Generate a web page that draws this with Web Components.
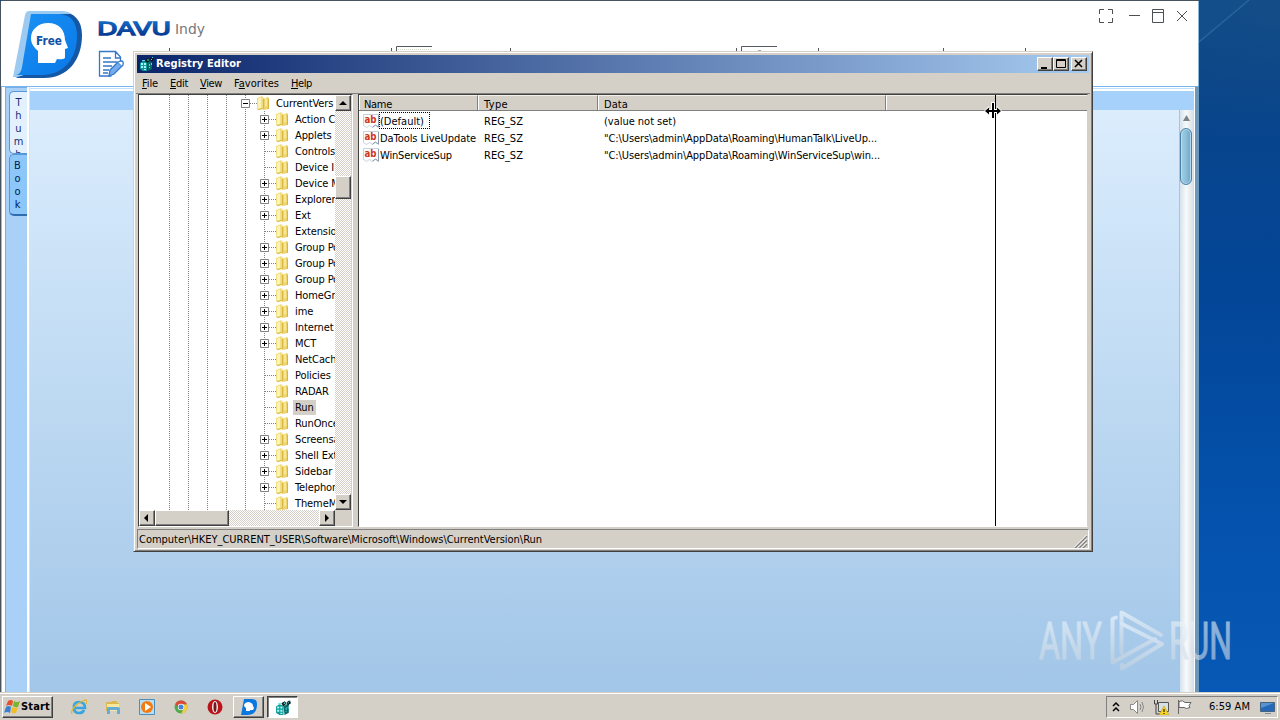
<!DOCTYPE html>
<html lang="en">
<head>
<meta charset="UTF-8">
<title>Registry Editor</title>
<style>
    * {
        box-sizing: border-box;
    }

    body {
        margin: 0;
        width: 1280px;
        height: 720px;
        overflow: hidden;
        font: 11px/16px "DejaVu Sans Condensed", "DejaVu Sans", sans-serif;
        color: #000;
    }
</style>
</head>
<body>
<desk-top>
    <davu-window></davu-window>
    <registry-window></registry-window>
    <any-run></any-run>
    <task-bar slot="taskbar"></task-bar>
</desk-top>

<script>
// shared look of all classic controls
const base = `
    * { box-sizing: border-box; }
    svg { display: block; flex: none; }
    .raised {
        background: #d4d0c8;
        border: 1px solid;
        border-color: #fff #404040 #404040 #fff;
        box-shadow: inset -1px -1px #808080;
    }
`;

class BaseElement extends HTMLElement {
    render(html) {
        if (!this.shadowRoot) this.attachShadow({ mode: "open" });
        const template = document.createElement("template");
        template.innerHTML = html.trim();
        this.shadowRoot.appendChild(template.content.cloneNode(true));
    }
}

const regIcon = (size) => `
    <svg width="${size}" height="${size}" viewBox="0 0 16 16">
        <path d="M1 7l3-2 4 1v9H4l-3-2z" fill="#0d9a98"/>
        <path d="M8 7l3-2h2v8l-4 2z" fill="#04696b"/>
        <path d="M2 7h2v2H2zM5 7h2v2H5zM2 10h2v2H2zM5 10h2v2H5zM5 13h2v1H5z" fill="#a4f6f2"/>
        <path d="M6 4l3-2 2 2-3 3zM11 3l3-2 1 3-3 2z" fill="#0b1c20"/>
        <path d="M8 4l1-1 1 1-1 1zM12 3h1v1h-1zM10 8h1v2h-1zM12 7h1v2h-1zM10 11h1v1h-1zM3 4h3v1H3zM13 1h1v1h-1z" fill="#4fd8d4"/>
    </svg>`;

// one line of text, letter spacing is adjusted so that it takes w pixels
class UiLabel extends BaseElement {
    connectedCallback() {
        this.render(`
            <style>
                :host { display: inline-block; white-space: nowrap; }
                span { display: inline-block; }
                ::slotted(u) { text-underline-offset: 1px; }
            </style>
            <span><slot></slot></span>
        `);
        const width = Number(this.getAttribute("w"));
        if (!width) return;
        const span = this.shadowRoot.querySelector("span");
        const natural = span.getBoundingClientRect().width;
        span.style.letterSpacing = (width - natural) / this.textContent.length + "px";
    }
}

class DeskTop extends BaseElement {
    connectedCallback() {
        this.render(`
            <style>
                ${base}
                :host {
                    display: flex;
                    flex-direction: column;
                    width: 1280px;
                    height: 720px;
                    overflow: hidden;
                    background: #0550ab;
                }
                .area {
                    position: relative;
                    flex: 1;
                    overflow: hidden;
                    background:
                        radial-gradient(ellipse at 100% 0, rgba(26,82,134,.6), rgba(0,70,140,0) 14%),
                        linear-gradient(#0b4587 0, #08448a 14%, #034596 40%, #0452ad 75%, #0759b5);
                }
                .ray { position: absolute; left: 1199px; top: 0; }
            </style>
            <div class="area">
                <svg class="ray" width="81" height="60">
                    <path d="M0 42L50 0" stroke="#2d679f" stroke-width="1.5"/>
                    <path d="M0 42L50 0H0z" fill="#1a5693" opacity=".3"/>
                </svg>
                <slot></slot>
            </div>
            <slot name="taskbar"></slot>
        `);
    }
}

class DavuWindow extends BaseElement {
    connectedCallback() {
        this.render(`
            <style>
                ${base}
                :host {
                    position: absolute;
                    left: 0;
                    top: 0;
                    width: 1199px;
                    height: 693px;
                    display: flex;
                    flex-direction: column;
                    background: #fff;
                    border-top: 1px solid #485360;
                    border-left: 1px solid #485360;
                    border-radius: 3px 0 0 0;
                }
                header {
                    height: 85px;
                    display: flex;
                    justify-content: space-between;
                    background: #fff;
                    flex: none;
                    border-right: 1px solid #8bb7dc;
                }
                .body {
                    flex: 1;
                    display: flex;
                    min-height: 0;
                    border: solid #79b4ec;
                    border-width: 1px 4px 0 0;
                    border-color: #79b4ec #6b97bd;
                }
                .edge { width: 4px; background: linear-gradient(90deg, #94bce4 1px, #fff 1px 4px); }
                .rail {
                    width: 22px;
                    padding: 3px 0 0 3px;
                    background: #a9d1f7;
                    border: 1px solid #76aeea;
                    border-right: 0;
                    border-bottom: 0;
                    display: flex;
                    flex-direction: column;
                }
                .tab {
                    border: 1px solid #5796d9;
                    border-right: 0;
                    border-radius: 5px 0 0 5px;
                    background: #e3f1ff;
                    color: #122f75;
                    font: 11px/13px "DejaVu Sans Condensed", sans-serif;
                    text-align: center;
                    white-space: pre;
                    height: 63px;
                    padding: 4px 0 0 0;
                    overflow: hidden;
                }
                .tab.book {
                    background: #8dc7fa;
                    color: #001c50;
                    height: 62px;
                    padding: 4px 2px 0 0;
                    border-bottom: 2px solid #2f6daf;
                }
                .split { width: 2px; margin-top: 3px; background: #fff; }
                .view {
                    flex: 1;
                    display: flex;
                    flex-direction: column;
                    border-top: 1px solid #fff;
                    border-left: 1px solid #cfe5fa;
                    border-right: 1px solid #fff;
                }
                .bar {
                    height: 22px;
                    background: linear-gradient(#c0e0ff 1px, #fff 1px 3px, #a5d1fa 3px);
                }
                .page {
                    flex: 1;
                    display: flex;
                    justify-content: flex-end;
                    background: linear-gradient(#dbedfd, #c0dbf3 45%, #a2c6e8);
                }
                .scroll {
                    width: 15px;
                    background: linear-gradient(90deg, #d6e2ec, #f8fafc 45%, #d5dde4);
                    border-left: 1px solid #aac4dc;
                    padding: 4px 0 0;
                }
                .thumb {
                    width: 12px;
                    height: 57px;
                    margin-top: 6px;
                    border: 1px solid #4a83aa;
                    border-radius: 6px;
                    background: linear-gradient(90deg, #a4cfe3, #8bbfdb 50%, #6ca5c5);
                    box-shadow: inset 0 0 0 1px #b7dbea;
                }
            </style>
            <header>
                <svg width="1040" height="85" viewBox="1 1 1040 85">
                    <defs>
                        <linearGradient id="face" x2="1" y2="1">
                            <stop offset="0" stop-color="#1b91f3"/>
                            <stop offset="1" stop-color="#0878e8"/>
                        </linearGradient>
                        <linearGradient id="word" x2="0" y2="1">
                            <stop offset="0" stop-color="#1675cf"/>
                            <stop offset="1" stop-color="#042c83"/>
                        </linearGradient>
                    </defs>
                    <path d="M30 12q-3 0-4 4L15 73q-1 5 4 5h25c24 0 38-18 38-43 0-15-8-23-21-23z" fill="#1457a4"/>
                    <path d="M29 11q-3 0-4 4L13 77h4q9-2 11-5 3-4 5-22l5-30 6-6h28q-4-3-11-3z" fill="#9dcaf0"/>
                    <path d="M31 14L22 67q-1 7-6 8h26c21 0 35-16 35-39 0-14-6-21-17-22z" fill="url(#face)"/>
                    <path d="M38 63v-12c-4-4-7-7-7-13 0-9 8-15 17-15 11 0 17 7 17 17l3 8-3 1v9q-2 2-8 1l-2 4z" fill="#fff"/>
                    <text x="36" y="45" font-family="DejaVu Sans Condensed, sans-serif" font-weight="bold" font-size="12" textLength="26" lengthAdjust="spacingAndGlyphs" fill="#1352a6">Free</text>
                    <text x="97" y="35" font-family="DejaVu Sans, sans-serif" font-size="18" textLength="74" lengthAdjust="spacingAndGlyphs" fill="url(#word)" stroke="url(#word)" stroke-width="1.3">DAVU</text>
                    <text x="175" y="34" font-family="DejaVu Sans, sans-serif" font-size="14" textLength="30" lengthAdjust="spacingAndGlyphs" fill="#77777b">Indy</text>
                    <g fill="none" stroke="#3577c9" stroke-width="1.3">
                        <path d="M120.500 61v-4l-5-5.500h-16v24.500h12M115.500 52v6h5M103 58h8M103 62h14M103 66h9M103 70h6M103 73h5"/>
                        <path d="M110 70l8-8 4 4-8 8-5 2z" fill="#73adf0"/>
                        <path d="M118 62l3-1q3 0 2 4l-1 1" fill="#fff"/>
                    </g>
                    <g stroke="#555a60" fill="none">
                        <path d="M169.500 48v5M391.500 48v5M396.500 53v-6.500H432M510.500 48v5M736.500 48v5M741.500 53v-6.500H777M818.500 48v5M943.500 48v5M1025.500 48v5"/>
                        <path d="M398 49.500h33" stroke="#d5d8c6" stroke-dasharray="1 1"/>
                        <path d="M758 50.500h3" stroke="#aaa"/>
                    </g>
                </svg>
                <svg width="110" height="40" viewBox="1088 1 110 40" fill="none" stroke="#4d5053">
                    <path d="M1099.500 14V9.500h4.500M1108 9.500h4.500V14M1112.500 18v4.500H1108M1104 22.500h-4.500V18M1129 15.500h11M1152.500 9.500h11v13h-11zM1152.500 12.500h11M1177 11l10 10M1187 11l-10 10"/>
                </svg>
            </header>
            <div class="body">
                <div class="edge"></div>
                <div class="rail">
                    <div class="tab">T\nh\nu\nm\nb</div>
                    <div class="tab book">B\no\no\nk</div>
                </div>
                <div class="split"></div>
                <div class="view">
                    <div class="bar"></div>
                    <div class="page">
                        <div class="scroll">
                            <svg width="13" height="8"><path d="M3 7h7L6.500 1z" fill="#7b8289"/></svg>
                            <div class="thumb"></div>
                        </div>
                    </div>
                </div>
            </div>
        `);
    }
}

// square button with an arrow, used at both ends of the scrollbars
class ArrowButton extends BaseElement {
    connectedCallback() {
        const paths = {
            up: "M3 9h8L7 5z",
            down: "M3 5h8L7 9z",
            left: "M8 3v8L4 7z",
            right: "M5 3v8l4-4z",
        };
        this.render(`
            <style>
                ${base}
                :host { display: block; width: 16px; height: 16px; flex: none; }
                div { width: 100%; height: 100%; }
            </style>
            <div class="raised"><svg width="14" height="14"><path d="${paths[this.getAttribute("dir")]}"/></svg></div>
        `);
    }
}

class TreeItem extends BaseElement {
    connectedCallback() {
        const root = this.hasAttribute("root");
        const box = this.getAttribute("box");
        this.render(`
            <style>
                ${base}
                :host {
                    display: flex;
                    align-items: center;
                    height: 16px;
                    padding-left: ${root ? 102 : 121}px;
                    white-space: nowrap;
                    flex: none;
                }
                .text { line-height: 15px; margin-left: 0; padding: 0 2px; letter-spacing: -0.1px; }
                :host([selected]) .text { background: #d4d0c8; }
            </style>
            <svg width="33" height="16">
                <path d="M4.500 0v16M5 8.500h11" stroke="#808080" stroke-dasharray="1 1" fill="none"/>
                ${box ? `<path d="M.500 4.500h8v8h-8z" fill="#fff" stroke="#808080"/><path d="M2 8.500h5${box === "+" ? "M4.500 6v5" : ""}" stroke="#000"/>` : ""}
                <path d="M16 3l5-2 2 2v11l-6 1-1-1z" fill="#f1dd82"/>
                <path d="M22 4l5-2 1 1v11l-6 1z" fill="#ecd268"/>
                <path d="M17 4l3-2v11l-3 1z" fill="#fbf3b7"/>
                <path d="M24 4l2-1v8l-2 1z" fill="#f7e797"/>
                <path d="M22 4h1v9l-1 1zM17 14l5-1v1l-5 1zM27 4h1v10h-1z" fill="#d6b548"/>
            </svg>
            <span class="text"><slot></slot></span>
        `);
    }
}

class RegistryTree extends BaseElement {
    connectedCallback() {
        const items = [
            ["Action C", "+"], ["Applets", "+"], ["Controls"], ["Device I"], ["Device M", "+"],
            ["Explorer", "+"], ["Ext", "+"], ["Extensio"], ["Group Po", "+"], ["Group Po", "+"],
            ["Group Po", "+"], ["HomeGro", "+"], ["ime", "+"], ["Internet", "+"], ["MCT", "+"],
            ["NetCach"], ["Policies"], ["RADAR"], ["Run"], ["RunOnce"], ["Screensa", "+"],
            ["Shell Ext", "+"], ["Sidebar", "+"], ["Telephon", "+"], ["ThemeM"],
        ];
        this.render(`
            <style>
                ${base}
                :host {
                    display: flex;
                    flex-direction: column;
                    width: 215px;
                    border: 1px solid #404040;
                    border-right-color: #fff;
                    border-bottom-color: #fff;
                    background: #fff;
                }
                .top { display: flex; height: 415px; }
                .rows {
                    width: 196px;
                    display: flex;
                    flex-direction: column;
                    overflow: hidden;
                    background-image: linear-gradient(#808080 50%, transparent 50%),
                        linear-gradient(#808080 50%, transparent 50%), linear-gradient(#808080 50%, transparent 50%),
                        linear-gradient(#808080 50%, transparent 50%), linear-gradient(#808080 50%, transparent 50%);
                    background-size: 1px 2px;
                    background-repeat: repeat-y;
                    background-position: 30px 0, 49px 0, 68px 0, 87px 0, 106px 0;
                }
                .track { background: repeating-conic-gradient(#d4d0c8 0 25%, #fff 0 50%) 0 0 / 2px 2px; }
                .v { width: 16px; display: flex; flex-direction: column; }
                .v .thumb { height: 23px; margin: 65px 0 auto; }
                .h { height: 16px; display: flex; }
                .h .thumb { width: 74px; margin-right: auto; }
                .corner { width: 17px; background: #d4d0c8; }
                .fill { background: #d4d0c8; flex: 1; }
            </style>
            <div class="top">
                <div class="rows">
                    <tree-item root box="-">CurrentVers</tree-item>
                    ${items.map(([name, box]) => `<tree-item ${box ? `box="${box}"` : ""} ${name === "Run" ? "selected" : ""}>${name}</tree-item>`).join("")}
                </div>
                <div class="v track">
                    <arrow-button dir="up"></arrow-button>
                    <div class="thumb raised"></div>
                    <arrow-button dir="down"></arrow-button>
                </div>
                <div class="fill"></div>
            </div>
            <div class="h track">
                <arrow-button dir="left"></arrow-button>
                <div class="thumb raised"></div>
                <arrow-button dir="right"></arrow-button>
                <div class="corner"></div>
            </div>
        `);
    }
}

class ValueRow extends BaseElement {
    connectedCallback() {
        this.render(`
            <style>
                ${base}
                :host {
                    display: grid;
                    grid-template-columns: 125px 120px 1fr;
                    height: 17px;
                    line-height: 19px;
                    white-space: nowrap;
                }
                .name { display: flex; align-items: center; height: 17px; padding-left: 4px; }
                .label { padding: 0 1px; height: 17px; }
                :host([focused]) .label { outline: 1px dotted #000; outline-offset: -1px; width: 51px; }
            </style>
            <div class="name">
                <svg width="16" height="16">
                    <path d="M.500 1.500h15v13l-3-2-3 2-3-2-3 2-3-2z" fill="#fff" stroke="#c8d1dc"/>
                    <path d="M15.500 2v12l-3-2-3 2" stroke="#8b99ab" fill="none"/>
                    <text x="1.500" y="10" font-family="DejaVu Sans Condensed, sans-serif" font-size="10" font-weight="bold" textLength="12" lengthAdjust="spacingAndGlyphs" fill="#cf3520">ab</text>
                </svg>
                <div class="label"><slot name="name"></slot></div>
            </div>
            <slot name="type"></slot>
            <slot name="data"></slot>
        `);
    }
}

class ValueList extends BaseElement {
    connectedCallback() {
        this.render(`
            <style>
                ${base}
                :host {
                    position: relative;
                    display: flex;
                    flex-direction: column;
                    flex: 1;
                    background: #fff;
                    border: 1px solid #404040;
                    border-right-color: #d4d0c8;
                    border-bottom-color: #fff;
                }
                .head {
                    display: grid;
                    grid-template-columns: 119px 120px 288px 110px 1fr;
                    height: 16px;
                    background: #d4d0c8;
                    border-bottom: 1px solid #808080;
                    margin-bottom: 1px;
                }
                .head div {
                    height: 15px;
                    padding-left: 5px;
                    line-height: 18px;
                    border-top: 1px solid #f3f1ec;
                    border-right: 1px solid #808080;
                    border-left: 1px solid #fff;
                }
                .head div:first-child { padding-left: 4px; }
                .head div:nth-child(n+4) { border-right: 0; }
                .head div:last-child { border-left: 0; }
                .guide { position: absolute; left: 636px; top: 0; width: 1px; bottom: 0; background: #000; }
                .cursor { position: absolute; left: 625px; top: 7px; }
            </style>
            <div class="head">
                <div><ui-label w="28">Name</ui-label></div>
                <div><ui-label w="24">Type</ui-label></div>
                <div><ui-label w="24">Data</ui-label></div>
                <div></div>
                <div></div>
            </div>
            <value-row focused>
                <ui-label slot="name" w="44">(Default)</ui-label>
                <ui-label slot="type" w="39">REG_SZ</ui-label>
                <ui-label slot="data" w="72">(value not set)</ui-label>
            </value-row>
            <value-row>
                <ui-label slot="name" w="96">DaTools LiveUpdate</ui-label>
                <ui-label slot="type" w="39">REG_SZ</ui-label>
                <ui-label slot="data" w="273">"C:\\Users\\admin\\AppData\\Roaming\\HumanTalk\\LiveUp...</ui-label>
            </value-row>
            <value-row>
                <ui-label slot="name" w="72">WinServiceSup</ui-label>
                <ui-label slot="type" w="39">REG_SZ</ui-label>
                <ui-label slot="data" w="276">"C:\\Users\\admin\\AppData\\Roaming\\WinServiceSup\\win...</ui-label>
            </value-row>
            <div class="guide"></div>
            <svg class="cursor" width="18" height="18">
                <path d="M7 0h4v7h2V4l5 5-5 5v-3h-2v7H7v-7H5v3L0 9l5-5v3h2z" fill="#fff"/>
                <path d="M8 1h2v15H8zM2 8h14v2H2z"/>
                <path d="M5 5.500v7L1 9zM13 5.500v7L17 9z"/>
            </svg>
        `);
    }
}

class RegistryWindow extends BaseElement {
    connectedCallback() {
        this.render(`
            <style>
                ${base}
                :host {
                    position: absolute;
                    left: 133px;
                    top: 51px;
                    width: 960px;
                    height: 501px;
                    padding: 2px;
                    display: flex;
                    flex-direction: column;
                    background: #d4d0c8;
                    border: 1px solid;
                    border-color: #d4d0c8 #404040 #404040 #d4d0c8;
                    box-shadow: inset 1px 1px #fff, inset -1px -1px #808080;
                }
                .title {
                    display: flex;
                    align-items: center;
                    height: 18px;
                    margin: 1px;
                    padding: 0 2px;
                    color: #fff;
                    font-weight: bold;
                    background: linear-gradient(90deg, #0a246a, #a6caf0);
                }
                .title ui-label { margin: 0 auto 0 1px; line-height: 18px; }
                .btn { width: 16px; height: 14px; }
                .btn:last-child { margin-left: 2px; }
                nav { display: flex; gap: 12px; padding: 1px 0 0 6px; height: 19px; line-height: 17px; }
                .panes { display: flex; gap: 5px; height: 434px; padding: 0 2px 0 2px; border-top: 1px solid #808080; }
                .status {
                    height: 20px;
                    margin: 2px 1px 0 1px;
                    padding-left: 1px;
                    display: flex;
                    justify-content: space-between;
                    line-height: 19px;
                    border: 1px solid #808080;
                    border-right-color: #fff;
                    border-bottom-color: #fff;
                }
            </style>
            <div class="title">
                ${regIcon(16)}
                <ui-label w="85">Registry Editor</ui-label>
                <div class="btn raised"><svg width="14" height="12"><path d="M3 9h6v2H3z"/></svg></div>
                <div class="btn raised"><svg width="14" height="12"><path d="M2.500 1.500h9v8h-9zM2 2.500h10" fill="none" stroke="#000"/></svg></div>
                <div class="btn raised"><svg width="14" height="12"><path d="M3 2l7 7M10 2l-7 7" stroke="#000" stroke-width="1.600"/></svg></div>
            </div>
            <nav>
                <ui-label w="16"><u>F</u>ile</ui-label>
                <ui-label w="18"><u>E</u>dit</ui-label>
                <ui-label w="22"><u>V</u>iew</ui-label>
                <ui-label w="45">F<u>a</u>vorites</ui-label>
                <ui-label w="21"><u>H</u>elp</ui-label>
            </nav>
            <div class="panes">
                <registry-tree></registry-tree>
                <value-list></value-list>
            </div>
            <div class="status">
                <ui-label w="403">Computer\\HKEY_CURRENT_USER\\Software\\Microsoft\\Windows\\CurrentVersion\\Run</ui-label>
                <svg width="14" height="18" fill="none">
                    <path d="M1 18L13 6M5 18l8-8M9 18l4-4" stroke="#808080" stroke-width="1.500"/>
                    <path d="M0 17.500L12.500 5M4 17.500L12.500 9M8 17.500l4.500-4.500" stroke="#fff"/>
                </svg>
            </div>
        `);
    }
}

class AnyRun extends BaseElement {
    connectedCallback() {
        this.render(`
            <style>
                :host { position: absolute; left: 1030px; top: 605px; opacity: .6; }
                svg { display: block; }
            </style>
            <svg width="210" height="75" viewBox="1030 605 210 75">
                <defs>
                    <linearGradient id="g" x2="0" y2="1">
                        <stop offset="0" stop-color="#f4faff"/>
                        <stop offset="1" stop-color="#c9d4df"/>
                    </linearGradient>
                </defs>
                <g fill="url(#g)" stroke="url(#g)" stroke-width="1" font-family="Roboto, sans-serif" font-size="51">
                    <text x="1039" y="659" textLength="63" lengthAdjust="spacingAndGlyphs">ANY</text>
                    <text x="1169" y="659" textLength="63" lengthAdjust="spacingAndGlyphs">RUN</text>
                </g>
                <g fill="none" stroke="url(#g)" stroke-width="4" stroke-linejoin="round" stroke-linecap="round">
                    <path d="M1121.500 653V612.500L1161 635"/>
                    <path d="M1116 617.500L1112.500 619V662.500L1155 639"/>
                    <path d="M1122 624L1162 644L1122 668.500V665"/>
                </g>
            </svg>
        `);
    }
}

class TaskBar extends BaseElement {
    connectedCallback() {
        this.render(`
            <style>
                ${base}
                :host {
                    display: flex;
                    align-items: center;
                    height: 28px;
                    flex: none;
                    padding: 1px 2px 0;
                    background: #d4d0c8;
                    border-top: 1px solid #d4d0c8;
                    box-shadow: inset 0 1px #fff;
                    z-index: 1;
                }
                .start {
                    display: flex;
                    align-items: center;
                    width: 51px;
                    height: 22px;
                    padding-left: 1px;
                    font-weight: bold;
                    line-height: 18px;
                }
                .quick { display: flex; gap: 18px; margin: 0 10px 0 18px; }
                .task { width: 31px; height: 22px; padding: 2px 7px; margin-right: 3px; }
                .active {
                    background: #fff;
                    border: 1px solid;
                    border-color: #404040 #fff #fff #404040;
                    box-shadow: inset 1px 1px #808080;
                }
                .tray {
                    display: flex;
                    align-items: center;
                    gap: 8px;
                    width: 172px;
                    height: 22px;
                    margin-left: auto;
                    padding-left: 4px;
                    border: 1px solid;
                    border-color: #808080 #fff #fff #808080;
                }
                .tray svg:nth-of-type(3), .tray svg:nth-of-type(4) { margin-left: -1px; }
                .tray ui-label { margin-left: 8px; line-height: 18px; }
                .tray svg:last-child { margin-left: 2px; }
            </style>
            <div class="start raised">
                <svg width="17" height="16">
                    <path d="M4 2q3-2 5 0L8 7Q5 5 2 7z" fill="#e6502b"/>
                    <path d="M10 2q3 2 6 0l-2 6q-3 1-5-1z" fill="#77b62c"/>
                    <path d="M2 8q3-2 5 0l-1 6q-3-2-6 0z" fill="#3a82d0"/>
                    <path d="M8 8q3 2 6 0l-2 6q-3 1-5-1z" fill="#f4bd24"/>
                </svg>
                <ui-label w="29">Start</ui-label>
            </div>
            <div class="quick">
                <svg width="16" height="16" fill="none">
                    <path d="M3 9h11q0-6-6-6T3 9q0 5 5 5 4 0 5-3" stroke="#38a5df" stroke-width="2.600"/>
                    <path d="M1 15C-1 11 7 3 14 1q3 0 1 4" stroke="#e4b42c" stroke-width="1.300"/>
                </svg>
                <svg width="16" height="16">
                    <path d="M1 3h5l1-1h5v2h2v8H1z" fill="#dcb850"/>
                    <path d="M2 5h12v7H2z" fill="#f7e89d"/>
                    <path d="M2 15V9q0-1 1-1h10q2 0 2 2v5h-3v-4H5v4z" fill="#65add8"/>
                </svg>
                <svg width="16" height="16">
                    <path d="M.500.500h15v15H.500z" fill="#b9def3" stroke="#4c8dbb"/>
                    <circle cx="8" cy="8" r="6" fill="#f27c12"/>
                    <path d="M6 4l6 4-6 4z" fill="#fff"/>
                </svg>
                <svg width="16" height="16">
                    <circle cx="8" cy="8" r="6.500" fill="#51a94b"/>
                    <path d="M2.400 4.700A6.500 6.500 0 0 1 14 5.500H8L5 9z" fill="#dd4937"/>
                    <path d="M14 5.500A6.500 6.500 0 0 1 8 14.500l3-5-2-4z" fill="#f6cd40"/>
                    <circle cx="8" cy="8" r="3.200" fill="#fff"/>
                    <circle cx="8" cy="8" r="2.500" fill="#4780d4"/>
                </svg>
                <svg width="16" height="16">
                    <circle cx="8" cy="8" r="7.500" fill="#b9151b"/>
                    <ellipse cx="8" cy="8" rx="3" ry="6" fill="#eee"/>
                    <ellipse cx="8" cy="8" rx="1.500" ry="5" fill="#75191a"/>
                </svg>
            </div>
            <div class="task raised">
                <svg width="17" height="17">
                    <path d="M3 0h8q5 0 5 5 0 11-9 11H0z" fill="#0c78df"/>
                    <path d="M5 12v-3Q3 8 3 6q1-3 5-3 4 1 4 4l1 2-1 2H9v1z" fill="#fff"/>
                </svg>
            </div>
            <div class="task active">${regIcon(17)}</div>
            <div class="tray">
                <svg width="10" height="12" fill="none" stroke="#000" stroke-width="1.500"><path d="M2 5l3-3 3 3M2 10l3-3 3 3"/></svg>
                <svg width="17" height="16" fill="none" stroke="#888">
                    <path d="M1.500 5.500h3l4-4v13l-4-4h-3z" fill="#fff"/>
                    <path d="M11 5q2 3 0 6M13 3q3 5 0 10"/>
                </svg>
                <svg width="16" height="16">
                    <path d="M5.500 3.500h10v9h-10z" fill="#d9e0e2" stroke="#555"/>
                    <path d="M1.500 1v4h3V1M3 5v10h5" fill="none" stroke="#444"/>
                    <path d="M11 7l5 9H6z" fill="#f8d521" stroke="#bb960b" stroke-width=".5"/>
                    <path d="M10.500 10h1v3h-1zM10.500 14h1v1h-1z"/>
                </svg>
                <svg width="17" height="16" fill="#fff" stroke="#666"><path d="M2.500 1v14M3 2.500q4-2 6 1h6l-2 3 1 2q-4 2-6 0H3z"/></svg>
                <ui-label w="41">6:59 AM</ui-label>
                <svg width="16" height="15">
                    <path d="M.500 2.500h14v9H.500z" fill="#2868b8" stroke="#45627e"/>
                    <path d="M1 3h13L1 8z" fill="#5894d2"/>
                    <path d="M5 13h6v1H5z" fill="#7890a8"/>
                </svg>
            </div>
        `);
    }
}

customElements.define("ui-label", UiLabel);
customElements.define("arrow-button", ArrowButton);
customElements.define("tree-item", TreeItem);
customElements.define("registry-tree", RegistryTree);
customElements.define("value-row", ValueRow);
customElements.define("value-list", ValueList);
customElements.define("registry-window", RegistryWindow);
customElements.define("davu-window", DavuWindow);
customElements.define("any-run", AnyRun);
customElements.define("task-bar", TaskBar);
customElements.define("desk-top", DeskTop);
</script>
</body>
</html>
